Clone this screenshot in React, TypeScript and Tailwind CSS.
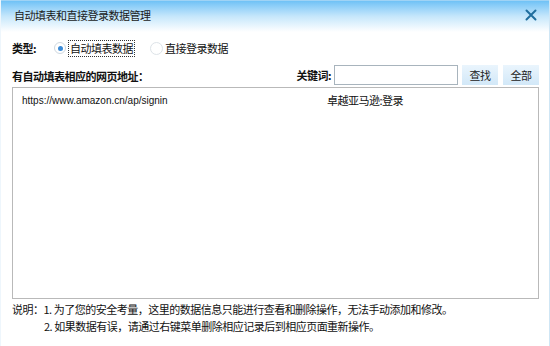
import React from "react";

const font = { fontFamily: '"Noto Sans CJK SC", "Liberation Sans", sans-serif' };

export default function App() {
  return (
    <div className="w-[550px] h-[346px] bg-white relative overflow-hidden text-[11px] tracking-[-0.5px] text-[#111]" style={font}>
      <div className="flex flex-col h-full border-r border-r-[#cfe6f5] border-l border-l-[#eef6fc]">
        {/* Title bar */}
        <div className="h-[32px] flex items-start justify-between pl-[13px] pr-[12px] pt-[5px] bg-gradient-to-b from-[#6fc2f6] via-[#c6e7fb] to-white border-t border-t-[#9fd3f5]">
          <span className="text-[11px] leading-[18px] text-[#1a1a1a]">自动填表和直接登录数据管理</span>
          <svg width="12" height="12" viewBox="0 0 12 12" className="mt-[3px]">
            <path d="M1.5 1.5 L10.5 10.5 M10.5 1.5 L1.5 10.5" stroke="#1f6e9e" strokeWidth="2" strokeLinecap="round" />
          </svg>
        </div>

        {/* Type row */}
        <div className="flex items-center h-[20px] mt-[6px] pl-[11px]">
          <span className="font-bold w-[42px]">类型:</span>
          <span className="w-[12px] h-[12px] rounded-full border border-[#cfd8df] bg-white flex items-center justify-center">
            <span className="w-[5px] h-[5px] rounded-full bg-[#3a8ad6]" />
          </span>
          <span className="ml-[2px] px-[1px] border border-dotted border-[#333] leading-[15px]">自动填表数据</span>
          <span className="ml-[15px] w-[13px] h-[13px] rounded-full border border-[#dde3e8] bg-white" />
          <span className="ml-[2px]">直接登录数据</span>
        </div>

        {/* Label + search row */}
        <div className="flex items-end h-[21px] mt-[6px] pl-[11px] pr-[10px]">
          <span className="font-bold leading-[16px] mb-[1px]">有自动填表相应的网页地址：</span>
          <div className="flex-1" />
          <span className="font-bold leading-[16px] mr-[3px] mb-[2px]">关键词:</span>
          <input className="w-[124px] h-[20px] border border-[#a8b4bd] bg-white outline-none" />
          <button className="ml-[4px] w-[36px] h-[20px] bg-gradient-to-b from-[#eaf5fd] to-[#d2e8f8] text-[11px] text-[#222]">查找</button>
          <button className="ml-[5px] w-[36px] h-[20px] bg-gradient-to-b from-[#eaf5fd] to-[#d2e8f8] text-[11px] text-[#222]">全部</button>
        </div>

        {/* List */}
        <div className="mt-[2px] ml-[11px] mr-[10px] h-[212px] border border-[#b9b9b9] bg-white">
          <div className="flex h-[22px] items-center pt-[2px]">
            <span className="pl-[9px] w-[314px] text-[10px] tracking-normal" style={{ fontFamily: '"Liberation Sans", "Noto Sans CJK SC", sans-serif' }}>https://www.amazon.cn/ap/signin</span>
            <span>卓越亚马逊:登录</span>
          </div>
        </div>

        {/* Notes */}
        <div className="mt-[2px] pl-[11px] leading-[17px]">
          <div>说明：1. 为了您的安全考量，这里的数据信息只能进行查看和删除操作，无法手动添加和修改。</div>
          <div className="pl-[32px]">2. 如果数据有误，请通过右键菜单删除相应记录后到相应页面重新操作。</div>
        </div>
      </div>
    </div>
  );
}
